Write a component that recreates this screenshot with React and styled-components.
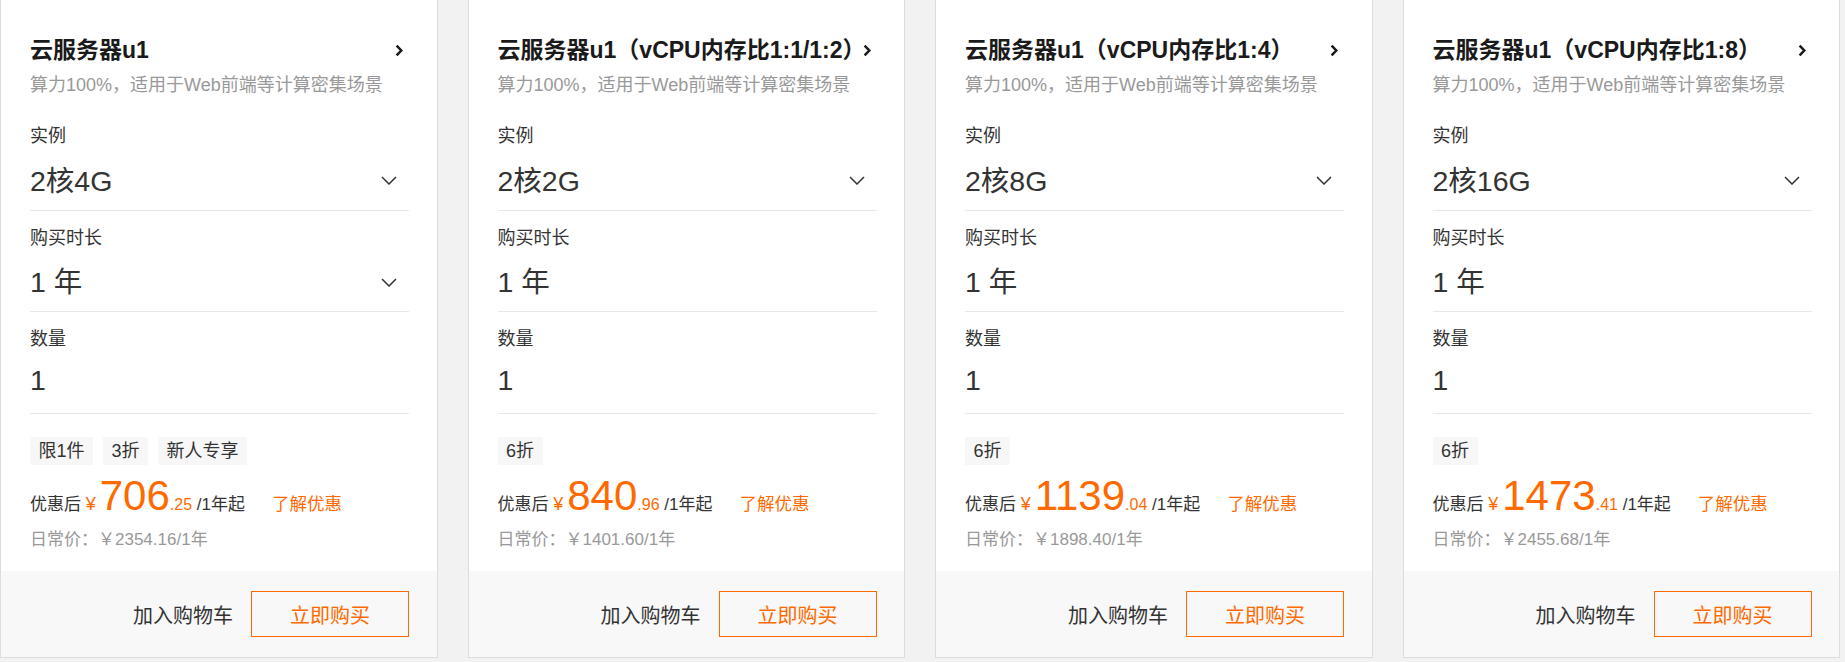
import React from "react";
import styled, { createGlobalStyle } from "styled-components";

const orange = "#ff6a00";

const GlobalStyle = createGlobalStyle`
  body {
    margin: 0;
    background: #f2f2f2;
    font-family: "Liberation Sans", "Noto Sans CJK SC", sans-serif;
    color: #333;
  }
`;

const products = [
  {
    title: "云服务器u1",
    spec: "2核4G",
    durationSelect: true,
    tags: ["限1件", "3折", "新人专享"],
    price: "706",
    cents: ".25",
    regular: "2354.16",
  },
  {
    title: "云服务器u1（vCPU内存比1:1/1:2）",
    spec: "2核2G",
    tags: ["6折"],
    price: "840",
    cents: ".96",
    regular: "1401.60",
  },
  {
    title: "云服务器u1（vCPU内存比1:4）",
    spec: "2核8G",
    tags: ["6折"],
    price: "1139",
    cents: ".04",
    regular: "1898.40",
  },
  {
    title: "云服务器u1（vCPU内存比1:8）",
    spec: "2核16G",
    tags: ["6折"],
    price: "1473",
    cents: ".41",
    regular: "2455.68",
  },
];

const ArrowRight = () => (
  <Icon width="8" height="13" viewBox="0 0 8 13">
    <path d="M1.6 1.6 L6.3 6.5 L1.6 11.4" fill="none" stroke="#1a1a1a" strokeWidth="2.5" />
  </Icon>
);

const ArrowDown = () => (
  <Icon width="16" height="9" viewBox="0 0 16 9">
    <path d="M1 1 L8 8 L15 1" fill="none" stroke="#333" strokeWidth="1.5" />
  </Icon>
);

const Field = ({ label, value, select, input }) => (
  <FieldBox>
    <FieldLabel>{label}</FieldLabel>
    <FieldValue $input={input}>
      <span>{value}</span>
      {select ? <ArrowDown /> : null}
    </FieldValue>
  </FieldBox>
);

const ProductCard = ({ p }) => (
  <Card>
    <Body>
      <TitleRow>
        <Title>{p.title}</Title>
        <ArrowRight />
      </TitleRow>
      <Desc>算力100%，适用于Web前端等计算密集场景</Desc>
      <Field label="实例" value={p.spec} select />
      <Field label="购买时长" value="1 年" select={p.durationSelect} />
      <Field label="数量" value="1" input />
      <Tags>
        {p.tags.map((t) => (
          <Tag key={t}>{t}</Tag>
        ))}
      </Tags>
      <PriceRow>
        <Small>优惠后 </Small>
        <Yen>¥</Yen>
        <Big>{p.price}</Big>
        <Cents>{p.cents}</Cents>
        <Small> /1年起</Small>
        <Link>了解优惠</Link>
      </PriceRow>
      <Regular>日常价：￥{p.regular}/1年</Regular>
    </Body>
    <Footer>
      <CartText>加入购物车</CartText>
      <BuyButton>立即购买</BuyButton>
    </Footer>
  </Card>
);

const App = () => (
  <>
    <GlobalStyle />
    <Grid>
      {products.map((p) => (
        <ProductCard key={p.title} p={p} />
      ))}
    </Grid>
  </>
);

const Icon = styled.svg`
  flex-shrink: 0;
  display: block;
`;

const Grid = styled.div`
  display: grid;
  grid-template-columns: repeat(4, 437.5px);
  gap: 30px;
`;

const Card = styled.div`
  background: #fff;
  border: 1px solid #dcdcdc;
  border-top: 0;
  display: flex;
  flex-direction: column;
`;

const Body = styled.div`
  padding: 35px 27.5px 19px 29px;
`;

const TitleRow = styled.div`
  display: flex;
  align-items: center;
  justify-content: space-between;
  padding-right: 6px;
`;

const Title = styled.div`
  flex: 0 1 auto;
  min-width: 0;
  font-size: 23px;
  line-height: 30px;
  font-weight: bold;
  color: #1a1a1a;
  white-space: nowrap;
`;

const Desc = styled.div`
  margin: 8px 0 12px;
  font-size: 18px;
  line-height: 24px;
  color: #999;
`;

const FieldBox = styled.div`
  padding: 15px 0 8.5px;
  border-bottom: 1px solid #e8e8e8;
`;

const FieldLabel = styled.div`
  font-size: 18px;
  line-height: 24px;
  color: #333;
  margin-bottom: 12px;
`;

const FieldValue = styled.div`
  display: flex;
  align-items: ${(p) => (p.$input ? "flex-start" : "center")};
  justify-content: space-between;
  padding-right: 12px;
  height: 41px;
  font-size: 28.5px;
  line-height: ${(p) => (p.$input ? "34px" : "40px")};
  color: #333;
`;

const Tags = styled.div`
  display: flex;
  gap: 10px;
  margin-top: 23.5px;
`;

const Tag = styled.span`
  height: 28px;
  line-height: 28px;
  padding: 0 8.5px;
  background: #f7f7f7;
  font-size: 18px;
  color: #333;
`;

const PriceRow = styled.div`
  display: flex;
  align-items: baseline;
  margin-top: 10px;
  height: 42px;
  white-space: pre;
`;

const Small = styled.span`
  font-size: 17px;
  color: #333;
`;

const Yen = styled.span`
  font-size: 18px;
  color: ${orange};
  margin-right: 4px;
`;

const Big = styled.span`
  font-size: 42px;
  line-height: 42px;
  color: ${orange};
`;

const Cents = styled.span`
  font-size: 16px;
  color: ${orange};
`;

const Link = styled.span`
  margin-left: 27px;
  font-size: 17.5px;
  color: ${orange};
`;

const Regular = styled.div`
  margin-top: 11px;
  font-size: 17px;
  line-height: 24px;
  color: #999;
`;

const Footer = styled.div`
  height: 86px;
  background: #f8f8f8;
  display: flex;
  align-items: center;
  justify-content: flex-end;
  gap: 18px;
  padding: 0 27.5px 0 29px;
`;

const CartText = styled.span`
  font-size: 20px;
  color: #333;
`;

const BuyButton = styled.button`
  width: 158px;
  height: 46px;
  border: 1px solid ${orange};
  background: transparent;
  color: ${orange};
  font-family: inherit;
  font-size: 20px;
  padding: 0;
`;

export default App;
